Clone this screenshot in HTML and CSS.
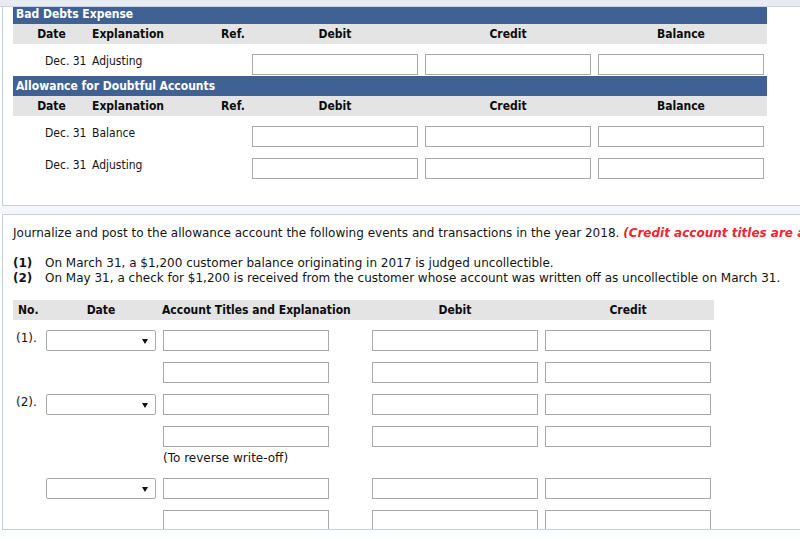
FILE: index.html
```html
<!DOCTYPE html>
<html lang="en">
<head>
<meta charset="utf-8">
<title>Allowance account</title>
<link rel="stylesheet" href="styles.css">
</head>
<body>
<div class="topband"></div>

<section class="panel panel-ledgers">
  <div class="ledgers">
    <div class="ledger">
      <div class="ledger-title">Bad Debts Expense</div>
      <div class="lrow lhead">
        <span class="c-date">Date</span><span class="c-expl">Explanation</span><span class="c-ref">Ref.</span>
        <div class="nums"><span>Debit</span><span>Credit</span><span>Balance</span></div>
      </div>
      <div class="lrow lbody">
        <span class="c-date">Dec. 31</span><span class="c-expl">Adjusting</span><span class="c-ref"></span>
        <div class="nums"><input class="field" type="text"><input class="field" type="text"><input class="field" type="text"></div>
      </div>
    </div>
    <div class="ledger">
      <div class="ledger-title">Allowance for Doubtful Accounts</div>
      <div class="lrow lhead">
        <span class="c-date">Date</span><span class="c-expl">Explanation</span><span class="c-ref">Ref.</span>
        <div class="nums"><span>Debit</span><span>Credit</span><span>Balance</span></div>
      </div>
      <div class="lrow lbody">
        <span class="c-date">Dec. 31</span><span class="c-expl">Balance</span><span class="c-ref"></span>
        <div class="nums"><input class="field" type="text"><input class="field" type="text"><input class="field" type="text"></div>
      </div>
      <div class="lrow lbody">
        <span class="c-date">Dec. 31</span><span class="c-expl">Adjusting</span><span class="c-ref"></span>
        <div class="nums"><input class="field" type="text"><input class="field" type="text"><input class="field" type="text"></div>
      </div>
    </div>
  </div>
</section>

<div class="gap"></div>

<section class="panel panel-journal">
  <p class="intro">Journalize and post to the allowance account the following events and transactions in the year 2018. <em class="warn">(Credit account titles are automatically indented when amount is entered. Do not indent manually.)</em></p>
  <div class="events">
    <div class="event"><b class="num">(1)</b>On March 31, a $1,200 customer balance originating in 2017 is judged uncollectible.</div>
    <div class="event"><b class="num">(2)</b>On May 31, a check for $1,200 is received from the customer whose account was written off as uncollectible on March 31.</div>
  </div>

  <div class="journal">
    <div class="jrow jhead">
      <span class="j-no">No.</span><span class="j-date">Date</span><span class="j-acct">Account Titles and Explanation</span>
      <div class="jnums"><span>Debit</span><span>Credit</span></div>
    </div>

    <div class="jrow jbody">
      <span class="j-no">(1).</span>
      <div class="j-date"><div class="select"><svg width="6" height="6" viewBox="0 0 6 6"><path d="M0 1 H6 L3 6 Z" fill="#111"/></svg></div></div>
      <div class="j-acct"><input class="field" type="text"></div>
      <div class="jnums"><input class="field" type="text"><input class="field" type="text"></div>
    </div>
    <div class="jrow jbody">
      <span class="j-no"></span><span class="j-date"></span>
      <div class="j-acct"><input class="field" type="text"></div>
      <div class="jnums"><input class="field" type="text"><input class="field" type="text"></div>
    </div>

    <div class="jrow jbody">
      <span class="j-no">(2).</span>
      <div class="j-date"><div class="select"><svg width="6" height="6" viewBox="0 0 6 6"><path d="M0 1 H6 L3 6 Z" fill="#111"/></svg></div></div>
      <div class="j-acct"><input class="field" type="text"></div>
      <div class="jnums"><input class="field" type="text"><input class="field" type="text"></div>
    </div>
    <div class="jrow jbody">
      <span class="j-no"></span><span class="j-date"></span>
      <div class="j-acct"><input class="field" type="text"></div>
      <div class="jnums"><input class="field" type="text"><input class="field" type="text"></div>
    </div>
    <div class="jrow jnote">
      <span class="j-no"></span><span class="j-date"></span>
      <span class="j-acct">(To reverse write-off)</span>
    </div>

    <div class="jrow jbody">
      <span class="j-no"></span>
      <div class="j-date"><div class="select"><svg width="6" height="6" viewBox="0 0 6 6"><path d="M0 1 H6 L3 6 Z" fill="#111"/></svg></div></div>
      <div class="j-acct"><input class="field" type="text"></div>
      <div class="jnums"><input class="field" type="text"><input class="field" type="text"></div>
    </div>
    <div class="jrow jbody">
      <span class="j-no"></span><span class="j-date"></span>
      <div class="j-acct"><input class="field" type="text"></div>
      <div class="jnums"><input class="field" type="text"><input class="field" type="text"></div>
    </div>
  </div>
</section>
</body>
</html>
```

FILE: styles.css
```css
html, body {
  margin: 0;
  padding: 0;
  overflow: hidden;
  background: #ffffff;
}
body {
  width: 800px;
  height: 538px;
  font-family: "DejaVu Sans", Verdana, sans-serif;
  font-size: 12px;
  color: #141414;
}

.topband {
  height: 6px;
  background: #e8ebf1;
  border-bottom: 1px solid #cbd2de;
}

.panel {
  margin-left: 2px;
  width: 900px;
  border-left: 1px solid #c6cfdc;
  border-bottom: 1px solid #c6cfdc;
  background: #ffffff;
  overflow: hidden;
  box-sizing: border-box;
  padding-left: 10px;
}

.gap {
  height: 8px;
  background: #f4f6fa;
}

/* ---------- Ledgers ---------- */
.panel-ledgers {
  height: 199px;
}
.ledgers {
  margin-top: -3px;
  width: 754px;
  font-family: "DejaVu Sans Condensed", "Liberation Sans", sans-serif;
  font-stretch: condensed;
}
.ledger-title {
  height: 20px;
  line-height: 20px;
  background: #3f6193;
  color: #ffffff;
  font-weight: bold;
  font-size: 12px;
  padding-left: 3px;
}
.lrow {
  display: grid;
  grid-template-columns: 77px 129px 33px 512px;
}
.nums {
  display: grid;
  grid-template-columns: repeat(3, 166px);
  column-gap: 7px;
}
.lhead {
  height: 20px;
  line-height: 21px;
  background: #e4e4e4;
  font-weight: bold;
  color: #0c0c0c;
}
.lhead .c-date { text-align: center; }
.lhead .c-expl { padding-left: 2px; }
.lhead .c-ref { padding-left: 2px; }
.lhead .nums span { text-align: center; }

.lbody {
  height: 32px;
  box-sizing: border-box;
  padding-top: 10px;
  line-height: 15px;
}
.lbody .c-date { padding-left: 32px; }
.lbody .c-expl { padding-left: 2px; }

.field {
  display: block;
  box-sizing: border-box;
  width: 166px;
  height: 21px;
  margin: 0;
  padding: 0 3px;
  border: 1px solid #a9a9a9;
  border-radius: 0;
  background: #ffffff;
  outline: none;
}

/* ---------- Journal ---------- */
.panel-journal {
  height: 316px;
  border-top: 1px solid #c6cfdc;
  padding-top: 11px;
}
.intro {
  margin: 0 0 16px 0;
  white-space: nowrap;
  line-height: 14px;
}
.warn {
  color: #f0262b;
  font-weight: bold;
  font-style: italic;
}
.events {
  line-height: 15px;
  white-space: nowrap;
  margin-bottom: 14px;
}
.event .num {
  display: inline-block;
  width: 32px;
}

.journal {
  width: 701px;
}
.jrow {
  display: grid;
  grid-template-columns: 33px 117px 209px 339px;
}
.jnums {
  display: grid;
  grid-template-columns: repeat(2, 166px);
  column-gap: 7px;
}
.jhead {
  height: 20px;
  line-height: 20px;
  background: #e4e4e4;
  font-family: "DejaVu Sans Condensed", "Liberation Sans", sans-serif;
  font-stretch: condensed;
  font-weight: bold;
  color: #0c0c0c;
  width: 701px;
}
.jhead .j-no { padding-left: 5px; }
.jhead .j-date { text-align: center; padding-right: 7px; }
.jhead .j-acct { margin-left: -1px; white-space: nowrap; }
.jhead .jnums span { text-align: center; }

.jbody {
  height: 32px;
  box-sizing: border-box;
  padding-top: 10px;
}
.jbody .j-no {
  padding-left: 3px;
  line-height: 14px;
  margin-top: 1px;
}
.jnote {
  height: 20px;
  box-sizing: border-box;
  padding-top: 3px;
  line-height: 14px;
}

.select {
  box-sizing: border-box;
  width: 110px;
  height: 21px;
  border: 1px solid #a9a9a9;
  border-radius: 2px;
  background: #ffffff;
  display: flex;
  align-items: center;
  justify-content: flex-end;
  padding-right: 7px;
}
.select svg { display: block; }
```
